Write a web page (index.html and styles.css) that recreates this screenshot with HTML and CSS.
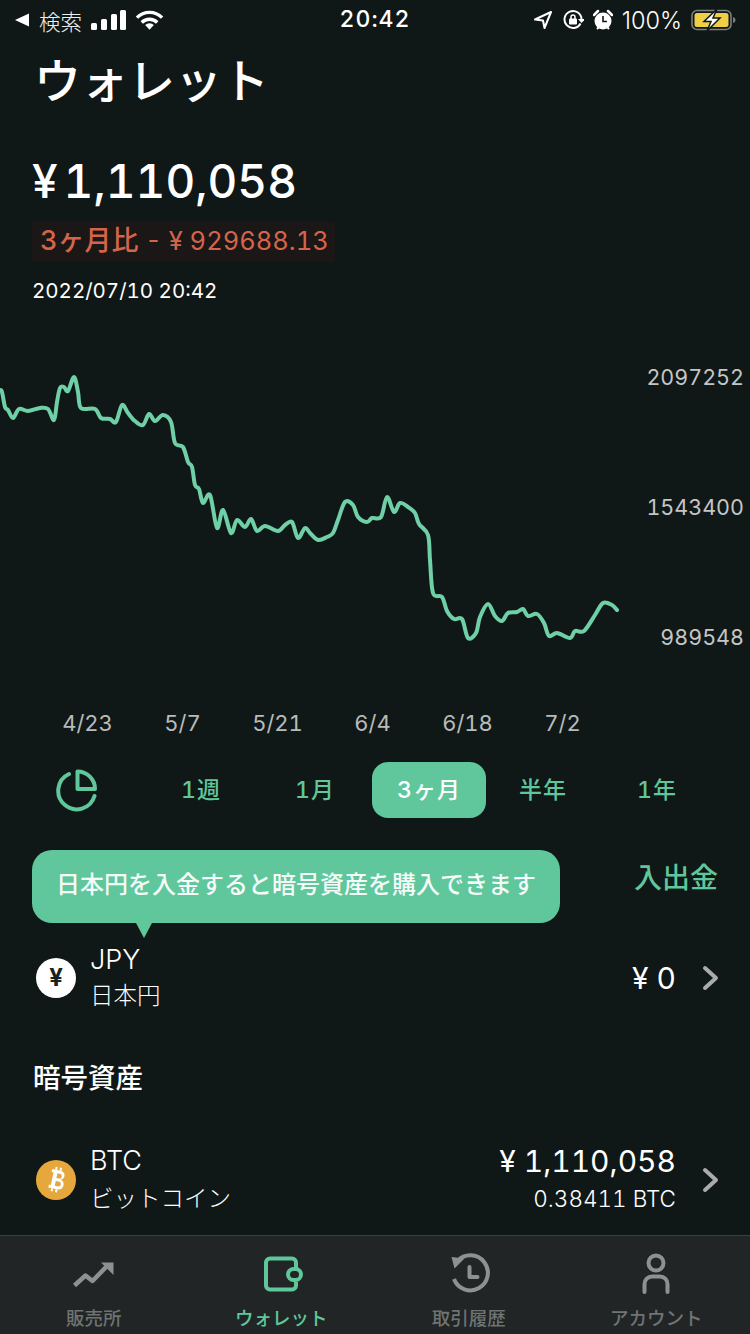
FILE: index.html
```html
<!DOCTYPE html>
<html lang="ja">
<head>
  <meta charset="UTF-8" />
  <title>ウォレット</title>
  <link rel="stylesheet" href="styles.css">
</head>
<body>
  <div class="status">
    <div class="status-side">
      <svg class="back-tri" width="16" height="14" viewBox="0 0 16 14"><path d="M15 0.500V13.500L1 7Z" fill="#fff"/></svg>
      <span class="status-back">検索</span>
      <svg class="signal" width="35" height="20" viewBox="0 0 35 20"><rect x="0" y="13" width="6" height="7" rx="1.500"/><rect x="10" y="9" width="6" height="11" rx="1.500"/><rect x="20" y="4" width="6" height="16" rx="1.500"/><rect x="29" y="0" width="6" height="20" rx="1.500"/></svg>
      <svg class="wifi" width="29" height="20" viewBox="0 0 30 20"><path d="M2 7.500a18.500 18.500 0 0 1 26 0" /><path d="M7 12.500a11.500 11.500 0 0 1 16 0"/><path d="M15 20l-4.500-4.700a6.300 6.300 0 0 1 9 0z" fill="#fff" stroke="none"/></svg>
    </div>
    <div class="status-time">20:42</div>
    <div class="status-side status-right">
      <svg width="20" height="20" viewBox="0 0 20 20"><path d="M18 2L2 9.500l8 1 1.500 7.500z" fill="none" stroke="#fff" stroke-width="2" stroke-linejoin="round"/></svg>
      <svg width="22" height="22" viewBox="0 0 22 22"><path d="M18.500 14.500A8.500 8.500 0 1 1 19.500 10" fill="none" stroke="#fff" stroke-width="2"/><path d="M16 10h7l-3.500 4z" fill="#fff"/><rect x="7" y="9.500" width="8" height="6" rx="1" fill="#fff"/><path d="M9 10V8a2 2 0 0 1 4 0v2" fill="none" stroke="#fff" stroke-width="1.500"/></svg>
      <svg width="20" height="22" viewBox="0 0 20 22"><circle cx="10" cy="12" r="8.500" fill="#fff"/><path d="M10 7v5.500h4" fill="none" stroke="#101817" stroke-width="1.600"/><path d="M1 6l4-4M19 6l-4-4" stroke="#fff" stroke-width="2.500" stroke-linecap="round"/><path d="M4 20l2-2M16 20l-2-2" stroke="#fff" stroke-width="2"/></svg>
      <span class="status-pct">100%</span>
      <svg class="battery" width="46" height="22" viewBox="0 0 46 22"><rect x="1" y="1.500" width="39" height="19" rx="5" fill="none" stroke="#7c7f7e" stroke-width="1.600"/><rect x="3.500" y="4" width="34" height="14" rx="2.500" fill="#f0cf45"/><path d="M42 8v6c1.500-.5 2.500-1.500 2.500-3s-1-2.500-2.500-3z" fill="#7c7f7e"/><path d="M26 0L13 12.500h7L16 22l13-13h-7z" fill="#fff" stroke="#101817" stroke-width="1.500"/></svg>
    </div>
  </div>

  <main class="wallet">
    <h1 class="title">ウォレット</h1>
    <div class="total">¥<span class="total-num">1,110,058</span></div>
    <div class="change"><span class="change-label">3ヶ月比</span> - ¥ 929688.13</div>
    <div class="date">2022/07/10 20:42</div>

    <div class="chart">
      <svg class="chart-line" width="750" height="360" viewBox="0 341 750 360">
        <path id="priceLine" d=""/>
      </svg>
      <span class="y-label y-top">2097252</span>
      <span class="y-label y-mid">1543400</span>
      <span class="y-label y-low">989548</span>
    </div>

    <div class="x-axis">
      <span>4/23</span><span>5/7</span><span>5/21</span><span>6/4</span><span>6/18</span><span>7/2</span>
    </div>

    <div class="ranges">
      <div class="pie">
        <svg width="44" height="44" viewBox="0 0 44 44" fill="none" stroke="#5fc79b" stroke-width="4" stroke-linejoin="round" stroke-linecap="round"><path d="M14 6A18.500 18.500 0 1 0 39.500 28"/><path d="M22.500 3.500a17.500 17.500 0 0 1 17.500 17.500H22.500z"/></svg>
      </div>
      <button class="range">1週</button>
      <button class="range">1月</button>
      <button class="range range-on">3ヶ月</button>
      <button class="range">半年</button>
      <button class="range">1年</button>
    </div>

    <div class="fiat-head">
      <div class="tip">日本円を入金すると暗号資産を購入できます</div>
      <a class="deposit">入出金</a>
    </div>

    <div class="asset asset-jpy">
      <div class="coin coin-jpy">¥</div>
      <div class="asset-name">
        <div class="asset-code">JPY</div>
        <div class="asset-jp">日本円</div>
      </div>
      <div class="asset-val">
        <div class="asset-yen">¥ 0</div>
      </div>
      <svg class="chev" width="18" height="26" viewBox="0 0 18 26"><path d="M3 3l11 10L3 23" fill="none" stroke="#a9acab" stroke-width="4" stroke-linecap="round" stroke-linejoin="round"/></svg>
    </div>

    <h2 class="section">暗号資産</h2>

    <div class="asset asset-btc">
      <svg class="coin" width="40" height="40" viewBox="0 0 40 40"><circle cx="20" cy="20" r="20" fill="#e6a83c"/><g transform="rotate(12 20 20)"><path d="M14 10h8.500c3 0 5 1.800 5 4.500 0 2-1.200 3.500-3 4.200 2.500.6 4 2.400 4 4.800 0 3.200-2.400 5.500-5.800 5.500H14v-3h2V13h-2zM20 13v5h2.500c1.500 0 2.500-1 2.500-2.500S24 13 22.500 13zM20 21v5h3c1.600 0 2.700-1 2.700-2.500S24.600 21 23 21z" fill="#fff" fill-rule="evenodd"/><path d="M18 7v3M22.500 7v3M18 29v3M22.500 29v3" stroke="#fff" stroke-width="2"/></g></svg>
      <div class="asset-name">
        <div class="asset-code">BTC</div>
        <div class="asset-jp">ビットコイン</div>
      </div>
      <div class="asset-val">
        <div class="asset-yen">¥ 1,110,058</div>
        <div class="asset-qty">0.38411 BTC</div>
      </div>
      <svg class="chev" width="18" height="26" viewBox="0 0 18 26"><path d="M3 3l11 10L3 23" fill="none" stroke="#a9acab" stroke-width="4" stroke-linecap="round" stroke-linejoin="round"/></svg>
    </div>
  </main>

  <nav class="tabs">
    <a class="tab">
      <svg width="44" height="44" viewBox="0 0 44 44" fill="none" stroke="#8e9190" stroke-width="4.500" stroke-linejoin="round"><path d="M2.500 33.500l11-10 7 5.500L36 13"/><path d="M29 10.500h12.500V23z" fill="#8e9190" stroke="none"/></svg>
      <span>販売所</span>
    </a>
    <a class="tab tab-on">
      <svg width="44" height="44" viewBox="0 0 44 44" fill="none" stroke="#5fc79b" stroke-width="4"><path d="M37 16V10.500a4 4 0 0 0-4-4H11a4 4 0 0 0-4 4v23a4 4 0 0 0 4 4h22a4 4 0 0 0 4-4V30"/><rect x="29" y="17" width="13" height="11" rx="5.500"/></svg>
      <span>ウォレット</span>
    </a>
    <a class="tab">
      <svg width="44" height="44" viewBox="0 0 44 44" fill="none" stroke="#8e9190" stroke-width="4" stroke-linecap="round"><path d="M10.500 9A17.500 17.500 0 1 1 7 27" stroke-linecap="butt"/><path d="M4.500 5l13 1.500-10 10z" fill="#8e9190" stroke="none"/><path d="M22.500 15v10h8" stroke-linejoin="round"/></svg>
      <span>取引履歴</span>
    </a>
    <a class="tab">
      <svg width="44" height="44" viewBox="0 0 44 44" fill="none" stroke="#8e9190" stroke-width="4" stroke-linecap="round"><circle cx="22" cy="11" r="7.500"/><path d="M10.500 40V32a7.500 7.500 0 0 1 7.500-7.500h8a7.500 7.500 0 0 1 7.500 7.500v8"/></svg>
      <span>アカウント</span>
    </a>
  </nav>
  <script src="chart.js"></script>
</body>
</html>
```

FILE: styles.css
```css
:root {
  --bg: #101817;
  --green: #5fc79b;
  --line: #6fcfa7;
  --tabbar: #212525;
}

* {
  box-sizing: border-box;
  font-family: Inter, "Noto Sans CJK JP", "Noto Sans", sans-serif;
  font-variant-numeric: tabular-nums;
}

body {
  margin: 0;
  width: 750px;
  height: 1334px;
  overflow: hidden;
  background: var(--bg);
  color: #fff;
  display: flex;
  flex-direction: column;
}

/* status bar */
.status {
  height: 40px;
  padding: 0 13px 0 14px;
  display: flex;
  align-items: center;
  justify-content: space-between;
  position: relative;
}

.status-side {
  display: flex;
  align-items: center;
  gap: 9px;
}

.status-back {
  font-size: 21.500px;
  font-weight: 300;
  color: #f0f0f0;
}

.signal {
  fill: #fff;
}

.wifi {
  fill: none;
  stroke: #fff;
  stroke-width: 3.5;
}

.status-time {
  font-size: 23px;
  font-weight: 500;
  letter-spacing: 1px;
  line-height: 38px;
  position: absolute;
  left: 0;
  right: 0;
  top: 0;
  text-align: center;
}

.status-right {
  gap: 9px;
}

.status-pct {
  font-size: 23.500px;
  font-weight: 300;
  font-variant-numeric: normal;
}

/* main */
.wallet {
  flex: 1;
  display: flex;
  flex-direction: column;
}

.title {
  margin: 11px 0 0 34px;
  font-size: 47px;
  line-height: 60px;
  font-weight: 500;
}

.total {
  margin: 38px 0 0 32px;
  font-size: 46px;
  line-height: 64px;
  font-weight: 500;
}

.total-num {
  margin-left: 6px;
}

.change {
  align-self: flex-start;
  margin: 9px 0 0 32px;
  padding: 0 8px;
  width: 303px;
  height: 40px;
  line-height: 38px;
  font-size: 25.500px;
  color: #d4654a;
  background: #1a1716;
  white-space: nowrap;
}

.change-label {
  font-size: 27px;
  font-weight: 500;
}

.date {
  margin: 13px 0 0 32px;
  font-size: 20.500px;
  line-height: 32px;
}

.chart {
  position: relative;
  height: 360px;
  margin-top: 34px;
}

.chart-line {
  display: block;
}

.chart-line path {
  fill: none;
  stroke: var(--line);
  stroke-width: 4;
  stroke-linejoin: round;
  stroke-linecap: round;
}

.y-label {
  position: absolute;
  right: 6px;
  font-size: 21.500px;
  line-height: 30px;
  color: #c4c6c5;
}

.y-top { top: 21px; }
.y-mid { top: 151px; }
.y-low { top: 281px; }

.x-axis {
  display: grid;
  grid-template-columns: repeat(6, 95px);
  margin: 7px 0 0 40px;
}

.x-axis span {
  text-align: center;
  font-size: 22px;
  line-height: 30px;
  color: #b8bbba;
}

.ranges {
  display: grid;
  grid-template-columns: 144px repeat(5, 114px);
  margin-top: 24px;
  height: 56px;
  align-items: center;
}

.pie {
  display: flex;
  justify-content: flex-end;
  padding-right: 45px;
}

.pie svg {
  display: block;
}

.range {
  height: 56px;
  border: none;
  background: none;
  color: var(--green);
  font-size: 23px;
  font-weight: 500;
  border-radius: 16px;
  padding: 0 0 5px;
  letter-spacing: 1px;
}

.range-on {
  background: var(--green);
  color: #fff;
}

.fiat-head {
  position: relative;
  height: 73px;
  margin-top: 32px;
  display: flex;
  justify-content: flex-end;
  align-items: center;
  padding-right: 32px;
}

.tip {
  position: absolute;
  left: 32px;
  top: 0;
  width: 528px;
  height: 73px;
  border-radius: 20px;
  background: var(--green);
  font-size: 24px;
  line-height: 70px;
  text-align: center;
  font-weight: 500;
  color: #f4fbf8;
}

.tip::after {
  content: "";
  position: absolute;
  left: 104px;
  top: 73px;
  border-left: 8px solid transparent;
  border-right: 8px solid transparent;
  border-top: 15px solid var(--green);
}

.deposit {
  color: var(--green);
  font-size: 28px;
  font-weight: 500;
  margin-top: -22px;
}

.asset {
  display: flex;
  align-items: center;
  padding: 0 30px 0 36px;
}

.asset-jpy {
  height: 74px;
  margin-top: 18px;
}

.asset-btc {
  height: 78px;
  margin-top: 43px;
}

.coin {
  flex: none;
  display: block;
}

.coin-jpy {
  width: 40px;
  height: 40px;
  border-radius: 50%;
  background: #fff;
  color: #1a2221;
  font-size: 24px;
  font-weight: 700;
  line-height: 40px;
  text-align: center;
}

.asset-name {
  margin-left: 14px;
  flex: 1;
}

.asset-code {
  font-size: 27px;
  line-height: 36px;
  font-weight: 300;
}

.asset-jp {
  font-size: 23.500px;
  line-height: 36px;
  font-weight: 300;
}

.asset-btc .asset-jp {
  margin-top: 2px;
}

.asset-val {
  text-align: right;
}

.asset-yen {
  font-size: 30px;
  line-height: 38px;
}

.asset-qty {
  font-size: 22.500px;
  line-height: 38px;
  font-weight: 300;
}

.chev {
  margin-left: 26px;
  flex: none;
}

.section {
  margin: 43px 0 0 33px;
  font-size: 27.500px;
  line-height: 40px;
  font-weight: 500;
}

/* bottom tabs */
.tabs {
  height: 99px;
  flex: none;
  background: var(--tabbar);
  border-top: 1px solid #3a3e3d;
  display: grid;
  grid-template-columns: repeat(4, 1fr);
}

.tab {
  display: flex;
  flex-direction: column;
  align-items: center;
  padding-top: 16px;
  color: #6f7372;
  font-size: 18.500px;
  font-weight: 500;
  line-height: 28px;
  gap: 8px;
}

.tab svg {
  display: block;
}

.tab-on {
  color: var(--green);
}
```

FILE: chart.js
```js
const pts = [[0,390],[2,392],[5,407],[8,410],[13,418],[19,409],[28,411],[40,408],[48,409],[54,420],[57,402],[60,388],[64,387],[68,391],[74,377],[78,392],[81,408],[95,409],[101,418],[110,419],[116,422],[122,405],[128,413],[135,421],[143,425],[149,414],[155,421],[163,415],[171,422],[175,443],[183,447],[188,462],[192,467],[195,485],[199,489],[203,503],[210,495],[217,528],[223,510],[231,533],[237,520],[245,527],[251,519],[257,531],[265,526],[278,531],[285,525],[292,522],[298,538],[305,528],[310,533],[318,540],[327,537],[333,533],[338,520],[345,502],[353,505],[358,517],[367,522],[372,518],[381,517],[387,497],[394,512],[400,503],[408,507],[415,513],[419,524],[428,535],[430,560],[433,593],[442,597],[447,611],[454,619],[462,619],[468,638],[476,633],[480,617],[488,604],[495,616],[502,621],[508,613],[517,612],[523,609],[528,616],[537,614],[544,623],[549,636],[557,633],[570,638],[575,631],[584,631],[595,615],[603,603],[612,605],[617,610]];

// catmull-rom to bezier so the line is not jagged
let d = `M${pts[0][0]} ${pts[0][1]}`;
for (let i = 0; i < pts.length - 1; i++) {
  const p0 = pts[i - 1] || pts[i];
  const p1 = pts[i];
  const p2 = pts[i + 1];
  const p3 = pts[i + 2] || p2;
  const c1x = p1[0] + (p2[0] - p0[0]) / 6;
  const c1y = p1[1] + (p2[1] - p0[1]) / 6;
  const c2x = p2[0] - (p3[0] - p1[0]) / 6;
  const c2y = p2[1] - (p3[1] - p1[1]) / 6;
  d += ` C${c1x} ${c1y} ${c2x} ${c2y} ${p2[0]} ${p2[1]}`;
}
document.getElementById("priceLine").setAttribute("d", d);
```
